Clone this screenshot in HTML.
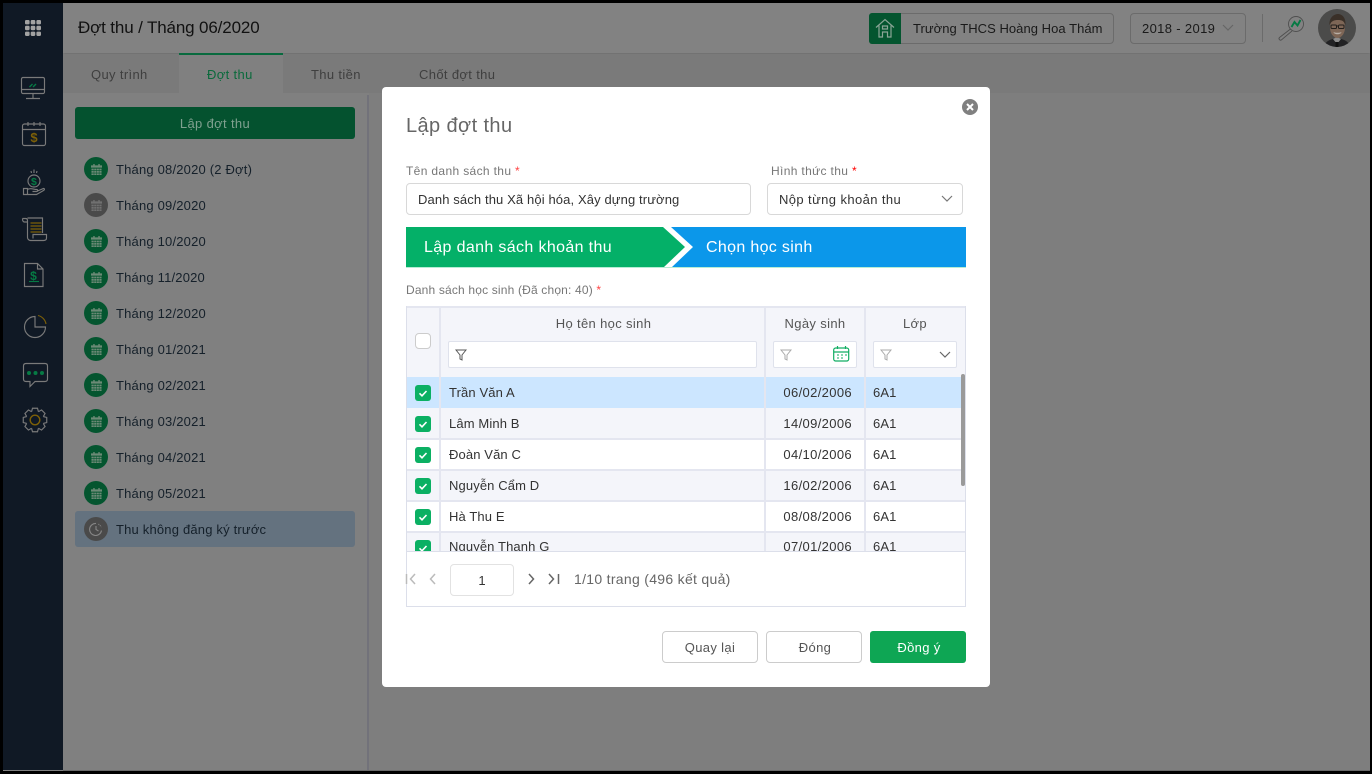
<!DOCTYPE html>
<html lang="vi"><head><meta charset="utf-8"><title>Lập đợt thu</title>
<style>
*{box-sizing:border-box}
html,body{margin:0;padding:0;width:1372px;height:774px;overflow:hidden;background:#000}
body{font-family:"Liberation Sans","Noto Sans CJK JP",sans-serif;position:relative;font-size:13px;letter-spacing:.12px}
.a{position:absolute}
.t{position:absolute;white-space:nowrap;line-height:20px;height:20px;margin-top:2px}
.l{margin-top:0;font-size:12px;color:#777}
.s{letter-spacing:.35px}
.m{color:#15202a;left:116px;letter-spacing:.19px}
.c{position:absolute;left:84px;width:24px;height:24px;border-radius:50%;background:#04552f;color:#6c8a76}
.c.g{background:#4a4a4a;color:#707070}
.c svg{position:absolute;left:6.500px;top:6.500px}
.b{position:absolute;background:#fff;border:1px solid #d8d8d8;border-radius:4px}
.cb{position:absolute;left:415px;width:16px;height:16px;border-radius:3px;background:#0bb063}
.cb svg{position:absolute;left:0;top:0}
.r{position:absolute;left:407px;width:558px;height:31px;border-bottom:2px solid #e4e6f0}
.n{color:#333}
.d{left:752px;width:100px;text-align:right;letter-spacing:.35px}
.v{position:absolute;width:2px;background:#e4e6f0}
</style></head><body>
<svg width="0" height="0" style="position:absolute"><defs>
<symbol id="cal" viewBox="0 0 12 12"><path fill="currentColor" d="M2.500 0h1.500v1.500h4V0h1.500v1.500H12V4H0V1.500h2.500zM.5 5h2.500v2H.5zM3.500 5h2.300v2H3.500zM6.300 5h2.300v2H6.300zM9.100 5h2.400v2H9.100zM.5 7.600h2.500v2H.5zM3.500 7.600h2.300v2H3.500zM6.300 7.600h2.300v2H6.300zM9.100 7.600h2.400v2H9.100zM.5 10.200h2.500V12H.5zM3.500 10.200h2.300V12H3.500zM6.300 10.200h2.300V12H6.300zM9.100 10.200h2.400V12H9.100z"/></symbol>
<symbol id="chk" viewBox="0 0 16 16"><path fill="none" stroke="#fff" stroke-width="1.600" d="M4.500 8.300l2.500 2.500 4.500-4.800"/></symbol>
</defs></svg>
<div class="a" style="left:3px;top:3px;width:1367px;height:768px;background:#808080"></div>
<!-- sidebar -->
<div class="a" style="left:3px;top:3px;width:60px;height:767px;background:#101925"></div>
<!-- header -->
<div class="a" style="left:63px;top:3px;width:1307px;height:50px;background:#828282;box-shadow:0 1px 3px rgba(0,0,0,.18)"></div>
<div class="a" style="left:63px;top:54px;width:1307px;height:39px;background:#7a7a7a"></div>
<div class="a" style="left:179px;top:53px;width:104px;height:40px;background:#808080;border-top:2px solid #086a3e"></div>
<div class="a" style="left:369px;top:93px;width:1001px;height:677px;background:#7e7e7e"></div>
<div class="a" style="left:367px;top:95px;width:2px;height:675px;background:#72727a"></div>
<div class="a" style="left:63px;top:770px;width:1307px;height:1px;background:#6a6a6a"></div>

<div class="t" style="left:78px;top:17px;margin-top:1px;font-size:17px;color:#111;letter-spacing:-.14px">Đợt thu / Tháng 06/2020</div>
<div class="t s" style="left:91px;top:63px;color:#3f3f3f">Quy trình</div>
<div class="t s" style="left:207px;top:63px;color:#0b6a3c">Đợt thu</div>
<div class="t s" style="left:311px;top:63px;color:#3f3f3f">Thu tiền</div>
<div class="t s" style="left:419px;top:63px;color:#3f3f3f">Chốt đợt thu</div>

<!-- header right -->
<div class="a" style="left:869px;top:13px;width:245px;height:31px;border:1px solid #6b6b6b;border-radius:4px"></div>
<div class="a" style="left:869px;top:13px;width:32px;height:31px;background:#04552f;border-radius:3px 0 0 3px"></div>
<svg class="a" style="left:875px;top:18px" width="20" height="20" viewBox="0 0 20 20" fill="none" stroke="#8ba596" stroke-width="1.200"><path d="M1 9.500 10 1.500l9 8M4 7.500V19h3.500v-5h5v5H16V7.500M7.500 8h5v3h-5z"/></svg>
<div class="t" style="left:913px;top:17px;color:#1a1a1a;letter-spacing:.05px">Trường THCS Hoàng Hoa Thám</div>
<div class="a" style="left:1130px;top:13px;width:116px;height:31px;border:1px solid #6b6b6b;border-radius:4px"></div>
<div class="t s" style="left:1142px;top:17px;color:#1a1a1a">2018 - 2019</div>
<svg class="a" style="left:1222px;top:24px" width="12" height="8" fill="none" stroke="#666" stroke-width="1.200"><path d="M1 1l5 5 5-5"/></svg>
<div class="a" style="left:1262px;top:14px;width:1px;height:28px;background:#6b6b6b"></div>
<svg class="a" style="left:1276px;top:13px" width="30" height="30" fill="none" stroke="#4f4f4f" stroke-width=".9"><circle cx="20" cy="11" r="7.500"/><path d="M14.500 16 3.500 24.500a1.500 1.500 0 0 0 2.200 2.200L16 18"/><path d="M15.500 14l3-5 3 3.500 3-5.500" stroke="#067a44" stroke-width="1.900"/></svg>
<svg class="a" style="left:1318px;top:9px" width="38" height="38" viewBox="0 0 38 38"><defs><clipPath id="av"><circle cx="19" cy="19" r="19"/></clipPath></defs><g clip-path="url(#av)"><rect width="38" height="38" fill="#4b4b4a"/><path d="M6 38c1-6 7-8 13-9 6 1 12 3 13 9z" fill="#222224"/><path d="M15 30l4 5 4-5-4-2z" fill="#8c8c8c"/><rect x="17.500" y="33" width="3" height="5" fill="#111"/><ellipse cx="19.500" cy="18.500" rx="7.500" ry="10.500" fill="#7e6656"/><path d="M11.500 16c-.5-8 5-11 8.500-11s8 3 7.500 11c-1.500-4-3.500-5-7.500-5s-6.500 1-8.500 5z" fill="#3a3028"/><g fill="none" stroke="#231f1c" stroke-width="1"><rect x="13" y="16" width="5.500" height="3.500" rx="1"/><rect x="20.500" y="16" width="5.500" height="3.500" rx="1"/><path d="M18.500 17h2"/></g><path d="M15.500 23c2 1 6 1 8 0-.5 3-7.500 3-8 0z" fill="#b8afa6"/></g></svg>

<!-- sidebar icons -->
<svg class="a" style="left:3px;top:3px" width="60" height="440" viewBox="3 3 60 440" fill="none" stroke="#7a7a7a" stroke-width="1.150">
<g fill="#a2a2a2" stroke="none"><rect x="25" y="20" width="4.600" height="4.400" rx="1.200"/><rect x="30.700" y="20" width="4.600" height="4.400" rx="1.200"/><rect x="36.400" y="20" width="4.600" height="4.400" rx="1.200"/><rect x="25" y="25.800" width="4.600" height="4.400" rx="1.200"/><rect x="30.700" y="25.800" width="4.600" height="4.400" rx="1.200"/><rect x="36.400" y="25.800" width="4.600" height="4.400" rx="1.200"/><rect x="25" y="31.600" width="4.600" height="4.400" rx="1.200"/><rect x="30.700" y="31.600" width="4.600" height="4.400" rx="1.200"/><rect x="36.400" y="31.600" width="4.600" height="4.400" rx="1.200"/></g>
<rect x="21.500" y="77.500" width="23" height="16" rx="1.500"/><path d="M21.500 89.500h23M33 94v4M26 98.500h14"/><path d="M29.500 87l3-3M33 87l3-3" stroke="#067a44" stroke-width="1.400"/>
<rect x="22.500" y="124" width="23" height="21.500" rx="2"/><path d="M22.500 129.500h23M28 122v4M34 122v4M40 122v4"/>
<text x="34" y="142" font-size="13" font-weight="bold" fill="#7d6008" stroke="none" text-anchor="middle" font-family="Liberation Sans">$</text>
<circle cx="34" cy="181" r="6"/><path d="M34 169.500v3.500M31 171l.5 2M37 171l-.5 2"/><text x="34" y="185" font-size="10.500" font-weight="bold" fill="#067a44" stroke="none" text-anchor="middle" font-family="Liberation Sans">$</text>
<path d="M23.500 188.500h4v6h-4zM27.500 189.500c3-2 6 0 9 0 1.500 0 1.500 2 0 2h-4m5-.5 6-2.500c1.500 0 1 1.500 0 2l-7 4h-9"/>
<path d="M22.500 218.500h3c1.500 0 2 1 2 2v17c0 2 2 3 3 3h13c2 0 3-1 3-2.500v-3.500H33v4M27.500 218h15v15M22.500 218.500c0 2 .5 3.500 2 3.500h3"/><path d="M30.500 223h11M30.500 226h11M30.500 229h11M30.500 232h11" stroke="#7d6008" stroke-width="1.200"/>
<path d="M24.500 263.500h13l5.500 5.500v17.500H24.500zM37.500 263.500v5.500h5.500"/>
<text x="33.500" y="280" font-size="12" font-weight="bold" fill="#067a44" stroke="none" text-anchor="middle" font-family="Liberation Sans">$</text><path d="M29 281.500h10" stroke="#067a44"/>
<path d="M35 316.500V327h10.500A10.500 10.500 0 1 1 35 316.500z"/><path d="M38 315.500A10.500 10.500 0 0 1 46 324" stroke="#7d6008"/>
<path d="M26 363.500h19c1.500 0 2.500 1 2.500 2.500v13c0 1.500-1 2.500-2.500 2.500H35l-5 5v-5h-4c-1.500 0-2.500-1-2.500-2.500v-13c0-1.500 1-2.500 2.500-2.500z"/><g fill="#067a44" stroke="none"><circle cx="29" cy="373" r="2"/><circle cx="35.500" cy="373" r="2"/><circle cx="42" cy="373" r="2"/></g>
<g transform="translate(35 420)"><path d="M-3.440-8.310L-2.500-11.740H2.500L3.440-8.310"/><path transform="rotate(45)" d="M-3.440-8.310L-2.500-11.740H2.500L3.440-8.310"/><path transform="rotate(90)" d="M-3.440-8.310L-2.500-11.740H2.500L3.440-8.310"/><path transform="rotate(135)" d="M-3.440-8.310L-2.500-11.740H2.500L3.440-8.310"/><path transform="rotate(180)" d="M-3.440-8.310L-2.500-11.740H2.500L3.440-8.310"/><path transform="rotate(225)" d="M-3.440-8.310L-2.500-11.740H2.500L3.440-8.310"/><path transform="rotate(270)" d="M-3.440-8.310L-2.500-11.740H2.500L3.440-8.310"/><path transform="rotate(315)" d="M-3.440-8.310L-2.500-11.740H2.500L3.440-8.310"/></g><circle cx="35" cy="420" r="4.800" stroke="#7d6008" stroke-width="1.400"/>
</svg>

<!-- left panel -->
<div class="a" style="left:75px;top:107px;width:280px;height:32px;background:#04522f;border-radius:3px"></div>
<div class="t s" style="left:75px;top:112px;width:280px;text-align:center;color:#7fa08f">Lập đợt thu</div>
<div class="a" style="left:75px;top:511px;width:280px;height:36px;background:#64727f;border-radius:3px"></div>

<div class="c" style="top:157px"><svg width="11" height="11"><use href="#cal"/></svg></div>
<div class="t m" style="top:158px">Tháng 08/2020 (2 Đợt)</div>
<div class="c g" style="top:193px"><svg width="11" height="11"><use href="#cal"/></svg></div>
<div class="t m" style="top:194px">Tháng 09/2020</div>
<div class="c" style="top:229px"><svg width="11" height="11"><use href="#cal"/></svg></div>
<div class="t m" style="top:230px">Tháng 10/2020</div>
<div class="c" style="top:265px"><svg width="11" height="11"><use href="#cal"/></svg></div>
<div class="t m" style="top:266px">Tháng 11/2020</div>
<div class="c" style="top:301px"><svg width="11" height="11"><use href="#cal"/></svg></div>
<div class="t m" style="top:302px">Tháng 12/2020</div>
<div class="c" style="top:337px"><svg width="11" height="11"><use href="#cal"/></svg></div>
<div class="t m" style="top:338px">Tháng 01/2021</div>
<div class="c" style="top:373px"><svg width="11" height="11"><use href="#cal"/></svg></div>
<div class="t m" style="top:374px">Tháng 02/2021</div>
<div class="c" style="top:409px"><svg width="11" height="11"><use href="#cal"/></svg></div>
<div class="t m" style="top:410px">Tháng 03/2021</div>
<div class="c" style="top:445px"><svg width="11" height="11"><use href="#cal"/></svg></div>
<div class="t m" style="top:446px">Tháng 04/2021</div>
<div class="c" style="top:481px"><svg width="11" height="11"><use href="#cal"/></svg></div>
<div class="t m" style="top:482px">Tháng 05/2021</div>
<div class="c g" style="top:517px"><svg style="left:5px;top:5px" width="14" height="14" fill="none" stroke="#868686" stroke-width="1.100"><path d="M12.500 8.500A6 6 0 1 1 7 1.500M7 4v3.500l2.500 1.500"/><path d="M9.500 2l3 3" stroke-dasharray="1 1"/></svg></div>
<div class="t m" style="top:518px">Thu không đăng ký trước</div>

<!-- modal -->
<div class="a" style="left:382px;top:87px;width:608px;height:600px;background:#fff;border-radius:4px"></div>
<div class="a" style="left:962px;top:99px;width:16px;height:16px;border-radius:50%;background:#808080"></div>
<svg class="a" style="left:962px;top:99px" width="16" height="16" stroke="#fff" stroke-width="2"><path d="M5 5l6 6M11 5l-6 6"/></svg>
<div class="t" style="left:406px;top:114px;font-size:20px;color:#666;letter-spacing:.4px">Lập đợt thu</div>

<div class="t l s" style="left:406px;top:161px">Tên danh sách thu <span style="color:#f44">*</span></div>
<div class="t l s" style="left:771px;top:161px">Hình thức thu <span style="color:#f00">*</span></div>
<div class="b" style="left:406px;top:183px;width:345px;height:32px"></div>
<div class="t n" style="left:418px;top:188px">Danh sách thu Xã hội hóa, Xây dựng trường</div>
<div class="b" style="left:767px;top:183px;width:196px;height:32px"></div>
<div class="t n" style="left:779px;top:188px;letter-spacing:.4px">Nộp từng khoản thu</div>
<svg class="a" style="left:941px;top:195px" width="12" height="8" fill="none" stroke="#777" stroke-width="1.200"><path d="M1 1l5 5 5-5"/></svg>

<!-- steps -->
<svg class="a" style="left:406px;top:227px" width="560" height="41"><rect y="40" width="560" height="1" fill="#b6ecd4"/><path d="M265 0h295v40H266l21-20z" fill="#0b97ea"/><path d="M0 0h257l22 20-21 20H0z" fill="#04b068"/></svg>
<div class="t" style="left:424px;top:236px;font-size:16px;color:#fff;letter-spacing:.36px">Lập danh sách khoản thu</div>
<div class="t" style="left:706px;top:236px;font-size:16px;color:#fff;letter-spacing:.33px">Chọn học sinh</div>

<div class="t l" style="left:406px;top:280px;letter-spacing:.17px">Danh sách học sinh (Đã chọn: 40) <span style="color:#f44">*</span></div>

<!-- table -->
<div class="a" style="left:406px;top:306px;width:560px;height:301px;border:1px solid #dcdfea;background:#fff"></div>
<div class="a" style="left:407px;top:307px;width:558px;height:70px;background:#f4f5fa"></div>
<div class="a" style="left:407px;top:306px;width:558px;height:2px;background:#e4e6f0"></div>
<div class="r" style="top:377px;background:#cce6ff;border-bottom:0"></div>
<div class="r" style="top:408px;height:32px;background:#f4f5fa"></div>
<div class="r" style="top:440px;background:#fff"></div>
<div class="r" style="top:471px;background:#f4f5fa"></div>
<div class="r" style="top:502px;background:#fff"></div>
<div class="r" style="top:533px;background:#f4f5fa;height:18px;border-bottom:0"></div>
<div class="v" style="left:439px;top:307px;height:244px"></div>
<div class="v" style="left:764px;top:307px;height:244px"></div>
<div class="v" style="left:864px;top:307px;height:244px"></div>

<div class="t s" style="left:441px;top:312px;width:325px;text-align:center;color:#555">Họ tên học sinh</div>
<div class="t s" style="left:765px;top:312px;width:100px;text-align:center;color:#555">Ngày sinh</div>
<div class="t s" style="left:865px;top:312px;width:100px;text-align:center;color:#555">Lớp</div>
<div class="a" style="left:415px;top:333px;width:16px;height:16px;border:1px solid #ccc;border-radius:4px;background:#fff"></div>
<div class="a" style="left:448px;top:341px;width:309px;height:27px;background:#fff;border:1px solid #dfe2ec;border-radius:2px"></div>
<div class="a" style="left:773px;top:341px;width:84px;height:27px;background:#fff;border:1px solid #dfe2ec;border-radius:2px"></div>
<div class="a" style="left:873px;top:341px;width:84px;height:27px;background:#fff;border:1px solid #dfe2ec;border-radius:2px"></div>
<svg class="a" style="left:455px;top:349px" width="12" height="12" fill="none" stroke="#555"><path d="M1 1h10L7 6v5L5 10V6z"/></svg>
<svg class="a" style="left:780px;top:349px" width="12" height="12" fill="none" stroke="#aaa"><path d="M1 1h10L7 6v5L5 10V6z"/></svg>
<svg class="a" style="left:880px;top:349px" width="12" height="12" fill="none" stroke="#aaa"><path d="M1 1h10L7 6v5L5 10V6z"/></svg>
<svg class="a" style="left:833px;top:346px" width="17" height="16" fill="none" stroke="#12ad63" stroke-width="1.200"><rect x=".7" y="2" width="15" height="13" rx="2"/><path d="M1 6h15M4.500 0v3M12.500 0v3"/><path d="M4 9h2M8 9h2M12 9h2M4 12h2M8 12h2" stroke-width="1"/></svg>
<svg class="a" style="left:939px;top:351px" width="12" height="8" fill="none" stroke="#666" stroke-width="1.200"><path d="M1 1l5 5 5-5"/></svg>

<div class="cb" style="top:385px"><svg width="16" height="16"><use href="#chk"/></svg></div>
<div class="cb" style="top:416px"><svg width="16" height="16"><use href="#chk"/></svg></div>
<div class="cb" style="top:447px"><svg width="16" height="16"><use href="#chk"/></svg></div>
<div class="cb" style="top:478px"><svg width="16" height="16"><use href="#chk"/></svg></div>
<div class="cb" style="top:509px"><svg width="16" height="16"><use href="#chk"/></svg></div>
<div class="cb" style="top:540px;height:11px;border-radius:3px 3px 0 0;overflow:hidden"><svg width="16" height="16"><use href="#chk"/></svg></div>

<div class="t n" style="left:449px;top:381px">Trần Văn A</div><div class="t n d" style="top:381px">06/02/2006</div><div class="t n" style="left:873px;top:381px">6A1</div>
<div class="t n" style="left:449px;top:412px">Lâm Minh B</div><div class="t n d" style="top:412px">14/09/2006</div><div class="t n" style="left:873px;top:412px">6A1</div>
<div class="t n" style="left:449px;top:443px">Đoàn Văn C</div><div class="t n d" style="top:443px">04/10/2006</div><div class="t n" style="left:873px;top:443px">6A1</div>
<div class="t n" style="left:449px;top:474px">Nguyễn Cẩm D</div><div class="t n d" style="top:474px">16/02/2006</div><div class="t n" style="left:873px;top:474px">6A1</div>
<div class="t n" style="left:449px;top:505px">Hà Thu E</div><div class="t n d" style="top:505px">08/08/2006</div><div class="t n" style="left:873px;top:505px">6A1</div>
<div class="t n" style="left:449px;top:531px;height:20px;overflow:hidden;margin-top:0;line-height:32px">Nguyễn Thanh G</div><div class="t n d" style="top:531px;height:20px;overflow:hidden;margin-top:0;line-height:32px">07/01/2006</div><div class="t n" style="left:873px;top:531px;height:20px;overflow:hidden;margin-top:0;line-height:32px">6A1</div>

<div class="a" style="left:961px;top:374px;width:4px;height:112px;background:#9a9a9a;border-radius:2px"></div>
<!-- pager -->
<div class="a" style="left:407px;top:551px;width:558px;height:55px;background:#fff;border-top:1px solid #dcdfea"></div>
<svg class="a" style="left:405px;top:572px" width="160" height="14" fill="none" stroke-width="1.500"><path d="M1.500 2v10M10 2 5.500 7l4.500 5M30 2l-4.500 5 4.500 5" stroke="#bbb"/><path d="M124 2l4.500 5-4.500 5M144 2l4.500 5-4.500 5M153.500 2v10" stroke="#666"/></svg>
<div class="b" style="left:450px;top:564px;width:64px;height:32px;border-color:#e2e2e2"></div>
<div class="t n" style="left:450px;top:569px;width:64px;text-align:center">1</div>
<div class="t" style="left:574px;top:567px;color:#666;font-size:14px;letter-spacing:.3px">1/10 trang (496 kết quả)</div>
<!-- buttons -->
<div class="b" style="left:662px;top:631px;width:96px;height:32px;border-color:#ccc"></div>
<div class="t s" style="left:662px;top:636px;width:96px;text-align:center;color:#555">Quay lại</div>
<div class="b" style="left:766px;top:631px;width:96px;height:32px;border-color:#ccc"></div>
<div class="t s" style="left:767px;top:636px;width:96px;text-align:center;color:#555">Đóng</div>
<div class="a" style="left:870px;top:631px;width:96px;height:32px;background:#0ea654;border-radius:3px"></div>
<div class="t s" style="left:871px;top:636px;width:96px;text-align:center;color:#fff">Đồng ý</div>
</body></html>
